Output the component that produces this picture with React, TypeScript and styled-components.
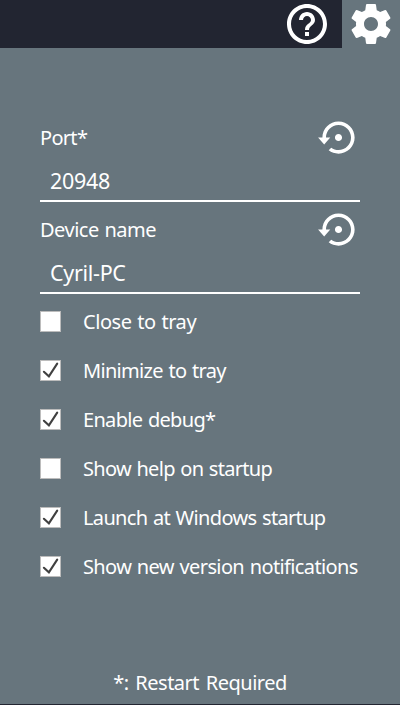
import React from 'react';
import styled, { createGlobalStyle } from 'styled-components';

const GlobalStyle = createGlobalStyle`
  * { box-sizing: border-box; }
  body { margin: 0; background: #67757d; }
`;

const Window = styled.main`
  display: flex;
  flex-direction: column;
  width: 400px;
  height: 705px;
  overflow: hidden;
  background: #67757d;
  border-bottom: 1px solid #222531;
  color: #fff;
  font-family: 'Noto Sans', sans-serif;
  font-size: 20px;
  line-height: 24px;
  word-spacing: 1px;
`;

const TopBar = styled.header`
  display: flex;
  justify-content: flex-end;
  height: 48px;
  flex: none;
  background: #222531;
`;

const Tab = styled.button<{ $active?: boolean }>`
  display: flex;
  justify-content: center;
  width: ${p => (p.$active ? 58 : 70)}px;
  height: 48px;
  padding: 0;
  border: 0;
  color: #fff;
  background: ${p => (p.$active ? '#67757d' : 'transparent')};
`;

const Icon = styled.svg<{ $size: number }>`
  display: block;
  flex: none;
  width: ${p => p.$size}px;
  height: ${p => p.$size}px;
  fill: currentColor;
`;

const Form = styled.section`
  display: flex;
  flex-direction: column;
  padding: 68px 40px 0;
`;

const Field = styled.div`
  height: 92px;
`;

const FieldHead = styled.div`
  display: flex;
  justify-content: space-between;
  height: 43px;
`;

const Label = styled.span<{ $spacing: number }>`
  padding-top: 10px;
  white-space: nowrap;
  letter-spacing: ${p => p.$spacing}px;
`;

const ResetButton = styled.button`
  padding: 0;
  border: 0;
  color: #fff;
  background: none;
`;

const Input = styled.input<{ $spacing: number }>`
  display: block;
  width: 320px;
  height: 43px;
  padding: 1px 10px 0;
  border: 0;
  border-bottom: 2px solid #fff;
  outline: 0;
  border-radius: 0;
  color: #fff;
  background: transparent;
  font: inherit;
  font-size: 21.5px;
  letter-spacing: ${p => p.$spacing}px;
`;

const Options = styled.div`
  display: flex;
  flex-direction: column;
  gap: 25px;
  padding-top: 10px;
`;

const Option = styled.label`
  display: flex;
  align-items: center;
  gap: 22px;
  height: 24px;
`;

const Box = styled.span`
  display: block;
  width: 21px;
  height: 21px;
  flex: none;
  margin-top: -1px;
  border: 1px solid #bcbcbc;
  background: #fff;
`;

const Tick = styled.svg`
  display: block;
  width: 19px;
  height: 19px;
  fill: none;
  stroke: #404040;
  stroke-width: 2.1;
  stroke-linecap: round;
`;

const OptionText = styled.span<{ $spacing: number }>`
  white-space: nowrap;
  letter-spacing: ${p => p.$spacing}px;
`;

const Footer = styled.footer`
  margin-top: auto;
  padding-bottom: 9px;
  text-align: center;
  letter-spacing: -0.5px;
  word-spacing: 2px;
`;

const Reset = () => (
  <ResetButton aria-label="Reset">
    <Icon $size={43} viewBox="0 0 24 24">
      <path d="M14 12c0-1.1-.9-2-2-2s-2 .9-2 2 .9 2 2 2 2-.9 2-2zm-2-9c-4.97 0-9 4.03-9 9H.6l3.4 3.9 3.4-3.9H5c0-3.87 3.13-7 7-7s7 3.13 7 7-3.13 7-7 7c-1.51 0-2.91-.49-4.06-1.3l-1.42 1.44C8.04 20.3 9.94 21 12 21c4.97 0 9-4.03 9-9s-4.03-9-9-9z" />
    </Icon>
  </ResetButton>
);

const fields = [
  { label: 'Port*', value: '20948', spacing: -0.7, valueSpacing: -0.3 },
  { label: 'Device name', value: 'Cyril-PC', spacing: -0.49, valueSpacing: -0.3 },
];

const options = [
  { label: 'Close to tray', checked: false, spacing: -0.45 },
  { label: 'Minimize to tray', checked: true, spacing: -0.68 },
  { label: 'Enable debug*', checked: true, spacing: -0.68 },
  { label: 'Show help on startup', checked: false, spacing: -0.7 },
  { label: 'Launch at Windows startup', checked: true, spacing: -0.66 },
  { label: 'Show new version notifications', checked: true, spacing: -0.62 },
];

export default function App() {
  return (
    <>
      <GlobalStyle />
      <Window>
        <TopBar>
          <Tab aria-label="Help">
            <Icon $size={48} viewBox="0 0 24 24">
              <path d="M11 18h2v-2h-2v2zm1-16C6.48 2 2 6.48 2 12s4.48 10 10 10 10-4.48 10-10S17.52 2 12 2zm0 18c-4.41 0-8-3.59-8-8s3.59-8 8-8 8 3.59 8 8-3.59 8-8 8zm0-14c-2.21 0-4 1.79-4 4h2c0-1.1.9-2 2-2s2 .9 2 2c0 2-3 1.75-3 5h2c0-2.25 3-2.5 3-5 0-2.21-1.79-4-4-4z" />
            </Icon>
          </Tab>
          <Tab $active aria-label="Settings">
            <Icon $size={48} viewBox="0 0 24 24">
              <path d="M19.43 12.98c.04-.32.07-.64.07-.98s-.03-.66-.07-.98l2.11-1.65c.19-.15.24-.42.12-.64l-2-3.46c-.12-.22-.39-.3-.61-.22l-2.49 1c-.52-.4-1.08-.73-1.69-.98l-.38-2.65C14.46 2.18 14.25 2 14 2h-4c-.25 0-.46.18-.49.42l-.38 2.65c-.61.25-1.17.59-1.69.98l-2.49-1c-.23-.09-.49 0-.61.22l-2 3.46c-.13.22-.07.49.12.64l2.11 1.65c-.04.32-.07.65-.07.98s.03.66.07.98l-2.11 1.65c-.19.15-.24.42-.12.64l2 3.46c.12.22.39.3.61.22l2.49-1c.52.4 1.08.73 1.69.98l.38 2.65c.03.24.24.42.49.42h4c.25 0 .46-.18.49-.42l.38-2.65c.61-.25 1.17-.59 1.69-.98l2.49 1c.23.09.49 0 .61-.22l2-3.46c.12-.22.07-.49-.12-.64l-2.11-1.65zM12 15.5c-1.93 0-3.5-1.57-3.5-3.5s1.57-3.5 3.5-3.5 3.5 1.57 3.5 3.5-1.57 3.5-3.5 3.5z" />
            </Icon>
          </Tab>
        </TopBar>
        <Form>
          {fields.map(f => (
            <Field key={f.label}>
              <FieldHead>
                <Label $spacing={f.spacing}>{f.label}</Label>
                <Reset />
              </FieldHead>
              <Input $spacing={f.valueSpacing} defaultValue={f.value} aria-label={f.label} spellCheck={false} />
            </Field>
          ))}
          <Options>
            {options.map(o => (
              <Option key={o.label}>
                <Box role="checkbox" aria-checked={o.checked}>
                  {o.checked && (
                    <Tick viewBox="0 0 19 19">
                      <path d="M2.9 10.8 7.9 15.3 16.2 2.6" />
                    </Tick>
                  )}
                </Box>
                <OptionText $spacing={o.spacing}>{o.label}</OptionText>
              </Option>
            ))}
          </Options>
        </Form>
        <Footer>*: Restart Required</Footer>
      </Window>
    </>
  );
}
